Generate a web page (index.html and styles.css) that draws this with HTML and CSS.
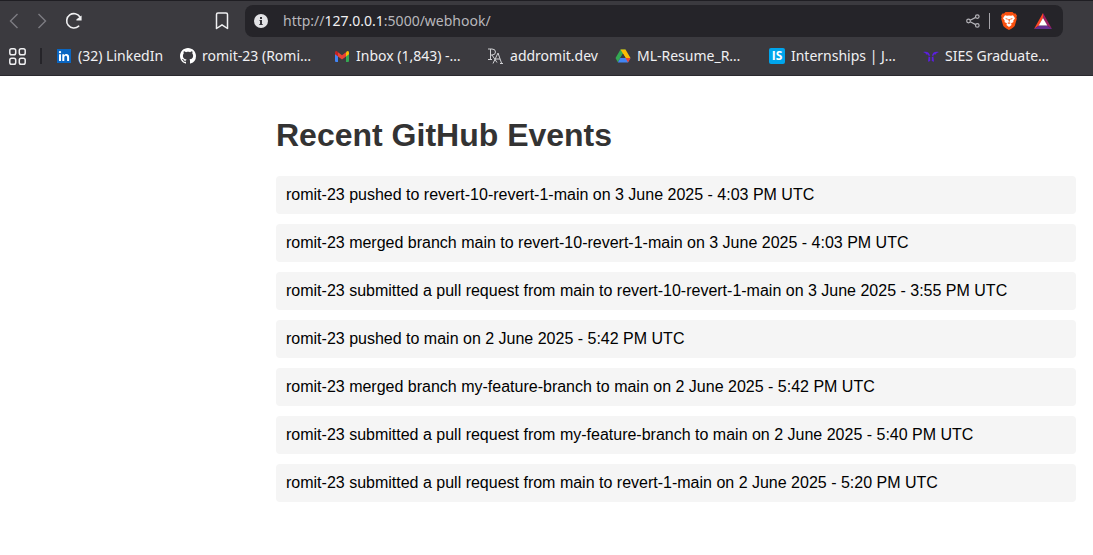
FILE: index.html
```html
<!DOCTYPE html>
<html lang="en">
<head>
<meta charset="utf-8">
<title>Recent GitHub Events</title>
<link rel="stylesheet" href="styles.css">
</head>
<body>
<header class="browser">
  <div class="toolbar">
    <div class="nav">
      <button class="icon-button dim" aria-label="Back"><svg width="10" height="16" viewBox="0 0 10 16"><path d="M8.500 1 1.500 8l7 7" fill="none" stroke="currentColor" stroke-width="1.400"/></svg></button>
      <button class="icon-button dim" aria-label="Forward"><svg width="10" height="16" viewBox="0 0 10 16"><path d="M1.500 1l7 7-7 7" fill="none" stroke="currentColor" stroke-width="1.400"/></svg></button>
      <button class="icon-button" aria-label="Reload"><svg width="18" height="18" viewBox="0 0 18 18"><path d="M13.700 14.200A7.200 7.200 0 1 1 15 5" fill="none" stroke="currentColor" stroke-width="1.600" stroke-linecap="round"/><path d="M16.600 3.600v5h-4.500c-1 0-1-1.200-.2-1.700z" fill="currentColor"/></svg></button>
    </div>
    <button class="icon-button" aria-label="Bookmark this page"><svg width="14" height="18" viewBox="0 0 14 18"><path d="M1.500 2.500Q1.500 1 3 1h8q1.500 0 1.500 1.500V16.500L7 12.800 1.500 16.500z" fill="none" stroke="currentColor" stroke-width="1.500" stroke-linejoin="round"/></svg></button>
    <div class="address">
      <svg width="14" height="14" viewBox="0 0 14 14" aria-hidden="true"><circle cx="7" cy="7" r="7" fill="#e2e2e5"/><path d="M6 3h2v2H6zM5.500 6H8v4h.7v1H5.300v-1H6V7h-.5z" fill="#333238"/></svg>
      <div class="url" role="textbox" aria-label="Address" tabindex="0">http://<span class="host">127.0.0.1</span>:5000/webhook/</div>
      <button class="icon-button muted" aria-label="Share"><svg width="14" height="14" viewBox="0 0 14 14" fill="none" stroke="currentColor" stroke-width="1.200"><circle cx="2.500" cy="7" r="1.800"/><circle cx="11.300" cy="2.600" r="1.800"/><circle cx="11.300" cy="11.400" r="1.800"/><path d="M4.200 6.200l5.500-2.800M4.200 7.800l5.500 2.800"/></svg></button>
      <span class="separator"></span>
      <button class="icon-button" aria-label="Brave Shields"><svg width="16" height="18" viewBox="0 0 16 18"><path d="M4.500 0h7l1.500 1.600 1.600-.2L16 3.700l-.6 1.600.4 1.500-2 7Q13.300 15.300 8 18 2.700 15.300 2.200 13.800l-2-7 .4-1.500L0 3.700l1.400-2.300 1.600.2z" fill="#f9500f"/><path d="M4 3.200l2 .5 2-.3 2 .3 2-.5 2 3-1.800 2.600.3 1.200-2.500 1.500.6 1.500L8 15l-2.600-2 .6-1.500L3.500 10l.3-1.200L2 6.200z" fill="#fff"/><path d="M4 6l2.700.8L6.300 8zM12 6l-2.700.8.4 1.200zM7.200 7h1.600v2.300L8 10zM6.300 11L8 10.300l1.700.7L8 12z" fill="#f9500f"/></svg></button>
      <button class="icon-button" aria-label="Brave Rewards"><svg width="18" height="16" viewBox="0 0 18 16"><path d="M9 0L0 16l5-3.500L9 5z" fill="#ff4724"/><path d="M9 0l9 16-5-3.500L9 5z" fill="#9e1f63"/><path d="M0 16h18l-5-3.500H5z" fill="#662d91"/><path d="M9 5l4.300 7.500H4.700z" fill="#fff"/></svg></button>
    </div>
  </div>
  <nav class="bookmarks" aria-label="Bookmarks">
    <button class="icon-button" aria-label="Apps"><svg width="17" height="17" viewBox="0 0 17 17" fill="none" stroke="currentColor" stroke-width="1.500"><rect x=".8" y=".8" width="5.900" height="5.900" rx="1.800"/><rect x="10.300" y=".8" width="5.900" height="5.900" rx="1.800"/><rect x=".8" y="10.300" width="5.900" height="5.900" rx="1.800"/><rect x="10.300" y="10.300" width="5.900" height="5.900" rx="1.800"/></svg></button>
    <span class="divider"></span>
    <div class="links">
      <a class="bookmark compact" href="#"><svg width="15" height="16" viewBox="0 0 15 16"><rect y="1" width="14" height="14" fill="#0a66c2"/><path d="M2 6.200h2V13H2zM5.300 6.200h1.900v1c1.200-1.900 4.900-1.600 4.900 1.700V13h-2V9.400c0-2.200-2.800-2-2.800 0V13h-2z" fill="#fff"/><circle cx="3" cy="4.100" r="1.200" fill="#fff"/></svg><span>(32) LinkedIn</span></a>
      <a class="bookmark" href="#"><svg width="16" height="16" viewBox="0 0 16 16"><path fill="#fff" d="M8 0C3.580 0 0 3.580 0 8c0 3.540 2.290 6.530 5.470 7.590.4.070.55-.17.55-.38 0-.19-.01-.82-.01-1.490-2.010.37-2.530-.49-2.690-.94-.09-.23-.48-.94-.82-1.130-.28-.15-.68-.52-.01-.53.63-.01 1.080.58 1.230.82.72 1.210 1.870.87 2.330.66.07-.52.28-.87.51-1.070-1.780-.2-3.640-.89-3.640-3.950 0-.87.31-1.590.82-2.150-.08-.2-.36-1.020.08-2.120 0 0 .67-.21 2.200.82.64-.18 1.320-.27 2-.27s1.360.09 2 .27c1.530-1.040 2.200-.82 2.200-.82.44 1.100.16 1.920.08 2.120.51.56.82 1.270.82 2.150 0 3.070-1.870 3.750-3.650 3.950.29.25.54.73.54 1.480 0 1.070-.01 1.930-.01 2.200 0 .21.15.46.55.38A8 8 0 0 0 16 8c0-4.420-3.580-8-8-8z"/></svg><span>romit-23 (Romi…</span></a>
      <a class="bookmark" href="#"><svg width="16" height="16" viewBox="0 0 16 16"><path d="M1 4l3 2.300V14H2q-1 0-1-1z" fill="#4285f4"/><path d="M15 4l-3 2.300V14h2q1 0 1-1z" fill="#34a853"/><path d="M12 4.200l1-1q2-.8 2 1.500v1.500l-3 2.400z" fill="#fbbc04"/><path d="M1 6.200V4.700q0-2.300 2-1.500l1 1v4.400z" fill="#c5221f"/><path d="M4 4.200l4 3 4-3v4.400l-4 3-4-3z" fill="#ea4335"/></svg><span>Inbox (1,843) -…</span></a>
      <a class="bookmark compact" href="#"><svg width="16" height="16" viewBox="0 0 16 16" fill="none" stroke="#d0d0d3"><path d="M0 1h4q3.500 0 3.500 3T4 7H2M2.500 1v10.500M0 11.500h4M4 7l5 7.500M5 15.500l5-10.500 3.500 10M7 11h5M12 15.500h3"/></svg><span>addromit.dev</span></a>
      <a class="bookmark" href="#"><svg width="16" height="16" viewBox="0 0 16 16"><path d="M5.500 1.500h5L5.300 10 2.800 14.300.5 10z" fill="#34a853"/><path d="M5.500 1.500h5l5 8.500h-5z" fill="#fbbc04"/><path d="M5.300 10h10.200L13 14.500H2.800z" fill="#4285f4"/><path d="M10.500 10h5L13 14.500z" fill="#ea4335"/><path d="M8 5.700l2.600 4.300H5.400z" fill="#3b3a3f"/></svg><span>ML-Resume_R…</span></a>
      <a class="bookmark" href="#"><svg width="16" height="16" viewBox="0 0 16 16"><rect width="16" height="16" rx="2" fill="#00a5ec"/><text class="mark" x="8" y="12" text-anchor="middle">IS</text></svg><span>Internships | J…</span></a>
      <a class="bookmark" href="#"><svg width="16" height="16" viewBox="0 0 16 16" fill="#5b1fe0"><path d="M0 4c3.500-1 6.800 0 7 4L5.300 7.500 4.500 6.200 3 6.400 2.600 5.200zM16 4c-3.500-1-6.800 0-7 4l1.700-.5.800-1.300 1.500.2.400-1.200zM5.600 8.500l1.600.5v4l-2.200.8zM10.400 8.500L8.800 9v4l2.200.8z"/></svg><span>SIES Graduate…</span></a>
    </div>
  </nav>
</header>
<main class="page">
  <h1 class="title">Recent GitHub Events</h1>
  <ul class="events">
    <li class="event">romit-23 pushed to revert-10-revert-1-main on 3 June 2025 - 4:03 PM UTC</li>
    <li class="event">romit-23 merged branch main to revert-10-revert-1-main on 3 June 2025 - 4:03 PM UTC</li>
    <li class="event">romit-23 submitted a pull request from main to revert-10-revert-1-main on 3 June 2025 - 3:55 PM UTC</li>
    <li class="event">romit-23 pushed to main on 2 June 2025 - 5:42 PM UTC</li>
    <li class="event">romit-23 merged branch my-feature-branch to main on 2 June 2025 - 5:42 PM UTC</li>
    <li class="event">romit-23 submitted a pull request from my-feature-branch to main on 2 June 2025 - 5:40 PM UTC</li>
    <li class="event">romit-23 submitted a pull request from main to revert-1-main on 2 June 2025 - 5:20 PM UTC</li>
  </ul>
</main>
</body>
</html>
```
FILE: styles.css
```css
* { box-sizing: border-box; }
body {
  margin: 0;
  background: #fff;
  font-family: "Liberation Sans", Arial, sans-serif;
}
svg { display: block; flex: none; }
.browser {
  background: #3b3a3f;
  border-top: 1px solid #1f1e23;
  border-bottom: 1px solid #2a292e;
  color: #f0f0f2;
  font-family: "Noto Sans", "Open Sans", sans-serif;
  font-size: 14px;
  line-height: 20px;
}
.toolbar {
  display: flex;
  align-items: center;
  gap: 16px;
  padding: 4px 30px 0 9px;
}
.nav {
  display: flex;
  align-items: center;
  gap: 16px;
  flex: 1;
}
.icon-button {
  display: flex;
  padding: 0;
  border: 0;
  background: none;
  color: #f0f0f2;
}
.dim {
  width: 12px;
  color: #7d7c82;
}
.muted { color: #b5b4b9; }
.address {
  display: flex;
  align-items: center;
  flex: 0 0 818px;
  height: 32px;
  padding: 0 11px 0 9px;
  border-radius: 8px;
  background: #252429;
}
.url {
  flex: 1;
  padding-left: 15px;
  color: #b8b7bc;
}
.host { color: #f0f0f2; }
.separator {
  width: 1px;
  height: 16px;
  margin: 0 11px 0 9px;
  background: #a5a4a9;
}
.separator + .icon-button { margin-right: 17px; }
.bookmarks {
  display: flex;
  align-items: center;
  height: 38px;
  padding: 0 20px 0 9px;
}
.divider {
  width: 2px;
  height: 16px;
  margin: 0 15px 0 14px;
  background: #252429;
}
.links {
  display: flex;
  gap: 17px;
}
.bookmark {
  display: flex;
  align-items: center;
  gap: 6px;
  width: 137px;
  color: inherit;
  text-decoration: none;
  white-space: nowrap;
}
.compact { width: auto; }
.mark {
  fill: #fff;
  font-family: "Open Sans", sans-serif;
  font-size: 12px;
  font-weight: 700;
}
.page {
  max-width: 800px;
  margin: 0 17px 0 auto;
  padding: 20px 0;
}
.title {
  margin: 20px 0 22px;
  color: #333;
  font-size: 32px;
  line-height: 38px;
}
.events {
  display: grid;
  gap: 10px;
  margin: 0;
  padding: 0;
  list-style: none;
}
.event {
  padding: 10px;
  border-radius: 4px;
  background: #f5f5f5;
  color: #000;
  font-size: 16px;
  line-height: 18px;
}
```
